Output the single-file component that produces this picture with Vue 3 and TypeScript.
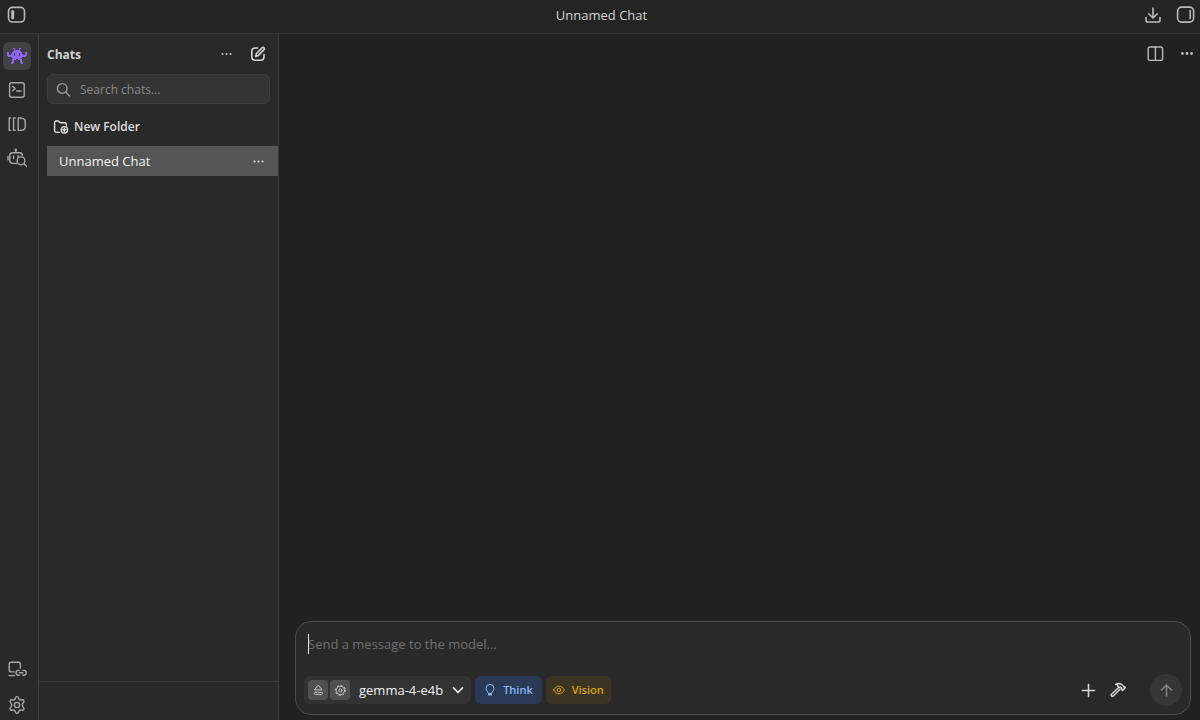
<script setup lang="ts">
import { onMounted, ref } from 'vue'

interface Chat {
  id: number
  title: string
}

const chats = ref<Chat[]>([{ id: 1, title: 'Unnamed Chat' }])
const activeId = ref(1)
const query = ref('')
const message = ref('')
const messageBox = ref<HTMLTextAreaElement | null>(null)

const invader = [
  '......##....##......',
  '.......#....#.......',
  '.......######.......',
  '......########......',
  '##...##########...##',
  '##...##.####.##...##',
  '##..###.####.###..##',
  '#######.####.#######',
  '.##################.',
  '.....##########.....',
  '......########......',
  '.....####..####.....',
  '.....##......##.....',
  '.....##......##.....',
  '....###......###....',
  '....##........##....',
]

const invaderPath = invader
  .flatMap((row, y) => [...row].map((c, x) => (c === '#' ? `M${x} ${y}h1v1h-1z` : '')))
  .join('')

onMounted(() => messageBox.value?.focus())
</script>

<template>
  <div class="app">
    <header class="titlebar">
      <button class="icon-btn" aria-label="Toggle sidebar">
        <svg width="20" height="20" viewBox="0 0 20 20" class="bold">
          <rect x="1.500" y="2.400" width="16" height="14.600" rx="4" />
          <rect x="4.200" y="5.200" width="3" height="9" rx="1" class="solid" />
        </svg>
      </button>
      <h1 class="title">Unnamed Chat</h1>
      <div class="titlebar-end">
        <button class="icon-btn" aria-label="Downloads">
          <svg width="20" height="20" viewBox="0 0 20 20" class="bold">
            <path d="M10 3v9.600M5.800 8.800l4.200 4.200 4.200-4.200M3 12.600v2.600a1.800 1.800 0 0 0 1.800 1.800h10.400a1.800 1.800 0 0 0 1.800-1.800v-2.600" />
          </svg>
        </button>
        <button class="icon-btn" aria-label="Toggle right panel">
          <svg width="20" height="20" viewBox="0 0 20 20" class="bold">
            <rect x="1.600" y="2.100" width="16" height="15" rx="4" />
            <path d="M14.200 5.600v8" />
          </svg>
        </button>
      </div>
    </header>

    <div class="body">
      <nav class="rail" aria-label="Sections">
        <button class="rail-btn active" aria-label="Chat">
          <svg width="20" height="16" viewBox="0 0 20 16" class="invader">
            <path :d="invaderPath" />
          </svg>
        </button>
        <button class="rail-btn" aria-label="Developer">
          <svg width="20" height="20" viewBox="0 0 20 20">
            <rect x="2.600" y="2.800" width="14.600" height="14.400" rx="2" />
            <path d="M5.600 6.400l2.600 2.200-2.600 2.200M9.600 11h4.400" />
          </svg>
        </button>
        <button class="rail-btn" aria-label="My models">
          <svg width="20" height="20" viewBox="0 0 20 20">
            <path d="M3.800 4H2.200v12.400h1.600M8.200 4H6.600v12.400h1.600M11.200 4h2.200c3 .4 4.800 1.400 4.800 3v6.400c0 1.600-1.800 2.600-4.800 3h-2.200z" />
          </svg>
        </button>
        <button class="rail-btn" aria-label="Discover">
          <svg width="20" height="20" viewBox="0 0 20 20">
            <circle cx="8.800" cy="1.800" r="1.300" class="solid" />
            <path d="M8.800 2.400v2.400M15.400 7.600c0-1.800-1-2.800-2.600-2.800H5.600c-1.800 0-2.800 1-2.800 2.800v5c0 1.800 1 2.800 2.800 2.800h4.200M1 8.400v3.400M6.600 8v2.600M11 7.600v1.400" />
            <circle cx="14" cy="12.800" r="3.900" />
            <path d="M16.800 15.600l3 3" />
          </svg>
        </button>
        <div class="spacer"></div>
        <button class="rail-btn" aria-label="Link devices">
          <svg width="20" height="20" viewBox="0 0 20 20">
            <path d="M13.400 9V5.400c0-1.400-.7-2.100-2.100-2.100H4.300c-1.400 0-2.100.7-2.100 2.100v5.400c0 1.400.7 2.100 2.100 2.100h2.900M2 16.600h5.600" />
            <path d="M12.400 11.400h-1a2.400 2.400 0 0 0 0 4.800h1M15.800 11.400h1a2.400 2.400 0 0 1 0 4.800h-1M12.400 13.800h3.400" />
          </svg>
        </button>
        <button class="rail-btn" aria-label="Settings">
          <svg width="20" height="20" viewBox="0 0 20 20">
            <path d="M8.300 3.300c.4-2.200 3-2.200 3.400 0 .3 1.400 1.500 2.100 2.800 1.600 2.100-.8 3.400 1.500 1.700 2.900-1.100.9-1.100 3.500 0 4.400 1.700 1.400.4 3.700-1.700 2.900-1.300-.5-2.500.2-2.800 1.600-.4 2.200-3 2.200-3.400 0-.3-1.400-1.500-2.100-2.800-1.600-2.100.8-3.400-1.500-1.700-2.900 1.100-.9 1.100-3.500 0-4.400-1.700-1.400-.4-3.700 1.700-2.900 1.300.5 2.500-.2 2.800-1.600z" />
            <circle cx="10" cy="10" r="2.600" />
          </svg>
        </button>
      </nav>

      <aside class="sidebar">
        <div class="sidebar-head">
          <h2>Chats</h2>
          <button class="icon-btn small" aria-label="Chat list options">
            <svg width="16" height="16" viewBox="0 0 16 16" class="dots">
              <circle cx="4.500" cy="8" r="1.100" /><circle cx="8.500" cy="8" r="1.100" /><circle cx="12.500" cy="8" r="1.100" />
            </svg>
          </button>
          <button class="icon-btn small light" aria-label="New chat">
            <svg width="16" height="16" viewBox="0 0 16 16" class="bold">
              <path d="M7.600 2H5.200C3 2 1.800 3.200 1.800 5.400v5.400c0 2.200 1.200 3.400 3.400 3.400h5.400c2.200 0 3.400-1.200 3.400-3.400V8.600" />
              <path d="M5.800 10.400l.5-2.700 5.900-5.900c.6-.6 1.300-.5 1.800 0s.6 1.200 0 1.800L8.200 9.600z" />
            </svg>
          </button>
        </div>

        <label class="search">
          <svg width="16" height="16" viewBox="0 0 16 16">
            <circle cx="6.200" cy="6.400" r="4.800" />
            <path d="M9.700 9.900l4 4" />
          </svg>
          <input v-model="query" type="text" placeholder="Search chats..." aria-label="Search chats" />
        </label>

        <button class="new-folder">
          <svg width="16" height="16" viewBox="0 0 16 16">
            <path d="M6.400 13.400H3.600c-1.400 0-2-.8-2-2V3.600c0-1 .6-1.600 1.600-1.600h1.600c1.400 0 1.600 1.800 3.200 1.800h3.600c1.200 0 1.800.6 1.800 1.800v.6" />
            <circle cx="11.400" cy="10.800" r="3.200" />
            <path d="M11.400 9.200v3.200M9.800 10.800h3.200" />
          </svg>
          New Folder
        </button>

        <ul class="chat-list">
          <li v-for="chat in chats" :key="chat.id" class="chat" :class="{ selected: chat.id === activeId }">
            <button class="chat-name" @click="activeId = chat.id">{{ chat.title }}</button>
            <button class="icon-btn small light" aria-label="Chat options">
              <svg width="16" height="16" viewBox="0 0 16 16" class="dots">
                <circle cx="4.500" cy="8.500" r="1.100" /><circle cx="8.500" cy="8.500" r="1.100" /><circle cx="12.500" cy="8.500" r="1.100" />
              </svg>
            </button>
          </li>
        </ul>
        <div class="sidebar-foot"></div>
      </aside>

      <main class="main">
        <div class="toolbar">
          <button class="icon-btn" aria-label="Split view">
            <svg width="20" height="20" viewBox="0 0 20 20">
              <rect x="3.200" y="3" width="14.400" height="13.400" rx="2" />
              <path d="M10.400 3v13.400" />
            </svg>
          </button>
          <button class="icon-btn" aria-label="More">
            <svg width="20" height="20" viewBox="0 0 20 20" class="dots">
              <circle cx="5.400" cy="9.500" r="1.400" /><circle cx="10" cy="9.500" r="1.400" /><circle cx="14.600" cy="9.500" r="1.400" />
            </svg>
          </button>
        </div>

        <div class="spacer"></div>

        <form class="composer" @submit.prevent>
          <div class="entry" :class="{ empty: !message }">
            <textarea ref="messageBox" v-model="message" rows="1" placeholder="Send a message to the model..." aria-label="Message"></textarea>
          </div>
          <div class="actions">
            <div class="model">
              <button type="button" class="mini" aria-label="Eject model">
                <svg width="12" height="12" viewBox="0 0 12 12">
                  <path d="M6.500 1.400l3.600 4.400H2.900z" />
                  <rect x="2.500" y="8.300" width="8" height="2.200" rx="1" />
                </svg>
              </button>
              <button type="button" class="mini" aria-label="Model settings">
                <svg width="12" height="12" viewBox="0 0 12 12">
                  <circle cx="6.400" cy="6.400" r="4.200" />
                  <circle cx="6.400" cy="6.400" r="5" stroke-dasharray="1.300 2.627" />
                  <circle cx="6.400" cy="6.400" r="1.600" />
                </svg>
              </button>
              <button type="button" class="model-name">
                gemma-4-e4b
                <svg width="12" height="12" viewBox="0 0 12 12" class="chevron"><path d="M1.400 3.800L6 8.400l4.600-4.600" /></svg>
              </button>
            </div>
            <button type="button" class="chip think">
              <svg width="12" height="12" viewBox="0 0 12 12">
                <path d="M4.300 9C4.300 7.600 2 6.800 2 4.400a4 4 0 0 1 8 0C10 6.800 7.700 7.600 7.700 9z" />
                <path d="M5 10.600h2" class="foot" />
              </svg>
              Think
            </button>
            <button type="button" class="chip vision">
              <svg width="12" height="12" viewBox="0 0 12 12">
                <path d="M.7 6C2 3.400 4 2.100 6 2.100S10 3.400 11.300 6C10 8.600 8 9.900 6 9.900S2 8.600.7 6z" />
                <circle cx="6" cy="6" r="1.800" />
              </svg>
              Vision
            </button>
            <div class="spacer"></div>
            <button type="button" class="icon-btn light tool" aria-label="Add attachment">
              <svg width="16" height="16" viewBox="0 0 16 16" class="bold"><path d="M8.500 2.500v12M2.500 8.500h12" /></svg>
            </button>
            <button type="button" class="icon-btn light tool" aria-label="Tools">
              <svg width="16" height="16" viewBox="0 0 16 16">
                <path d="M5.600 2.400c2.800-1.500 5.400-1 7.200 1l1 1.600 1-.2.600.8-2.800 3-.9-.8.200-1.200-1.700-1.700-1.300.6-1.300-1.300.2-1.100z" />
                <path d="M8.700 5.500l-7 6.500c-.8.800-.6 1.500-.2 1.900s1.200.6 2-.2l6.700-6.800" />
              </svg>
            </button>
            <button class="send" aria-label="Send">
              <svg width="16" height="16" viewBox="0 0 16 16" class="bold"><path d="M8.500 14V3.200M3.500 8l5-5 5 5" /></svg>
            </button>
          </div>
        </form>
      </main>
    </div>
  </div>
</template>

<style>
body {
  margin: 0;
  background: #212121;
}
</style>

<style scoped>
.app {
  display: flex;
  flex-direction: column;
  height: 100vh;
  background: #212121;
  color: #d2d2d2;
  font-family: 'Open Sans', 'Noto Sans', sans-serif;
  font-size: 12px;
  line-height: 16px;
}

.app * {
  box-sizing: border-box;
}

button,
input,
textarea {
  margin: 0;
  padding: 0;
  border: 0;
  background: none;
  color: inherit;
  font: inherit;
  outline: none;
}

button {
  display: flex;
  align-items: center;
  justify-content: center;
  cursor: pointer;
}

svg {
  display: block;
  flex: none;
  fill: none;
  stroke: currentColor;
  stroke-width: 1.4;
  stroke-linecap: round;
  stroke-linejoin: round;
}

svg.bold {
  stroke-width: 1.6;
}

.solid,
.dots {
  fill: currentColor;
  stroke: none;
}

.spacer {
  flex: 1;
}

.icon-btn {
  width: 20px;
  height: 20px;
  color: #b9b9b9;
}

.icon-btn.small {
  width: 16px;
  height: 16px;
}

.icon-btn.light {
  color: #d6d6d6;
}

.titlebar {
  display: grid;
  grid-template-columns: 1fr auto 1fr;
  align-items: center;
  flex: none;
  height: 34px;
  padding: 0 4px 4px 7px;
  background: #242424;
  border-bottom: 1px solid #333;
}

.title {
  margin: 0;
  font-size: 13px;
  font-weight: 400;
}

.titlebar-end {
  display: flex;
  justify-content: flex-end;
  gap: 13px;
}

.body {
  display: flex;
  flex: 1;
  min-height: 0;
}

.rail {
  display: flex;
  flex-direction: column;
  gap: 6px;
  flex: none;
  padding: 8px 7px 1px 3px;
  background: #292929;
  border-right: 1px solid #3f3f3f;
}

.rail-btn {
  width: 28px;
  height: 28px;
  border-radius: 6px;
  color: #a8a8a8;
}

.rail-btn.active {
  background: #424242;
}

.rail .rail-btn:last-child {
  margin-top: 2px;
}

.rail-btn .invader {
  fill: #8f63f5;
  stroke: none;
}

.sidebar {
  display: flex;
  flex-direction: column;
  flex: none;
  width: 240px;
  padding-left: 8px;
  background: #292929;
  border-right: 1px solid #3a3a3a;
}

.sidebar-head {
  display: flex;
  align-items: center;
  gap: 16px;
  height: 40px;
  padding-right: 12px;
}

.sidebar-head h2 {
  flex: 1;
  margin: 0;
  padding-top: 1px;
  font-size: 12px;
  font-weight: 700;
}

.search {
  display: flex;
  align-items: center;
  gap: 8px;
  height: 30px;
  margin-right: 8px;
  padding: 1px 8px 0;
  border: 1px solid #3d3d3d;
  border-radius: 6px;
  background: #343434;
  color: #9a9a9a;
}

.search input {
  flex: 1;
  min-width: 0;
}

.search input::placeholder {
  color: #8a8a8a;
}

.new-folder {
  gap: 5px;
  align-self: flex-start;
  height: 30px;
  margin: 8px 0 4px;
  padding-left: 6px;
  color: #dedede;
  font-weight: 600;
}

.chat-list {
  flex: 1;
  margin: 0;
  padding: 0;
  list-style: none;
}

.chat {
  display: flex;
  align-items: center;
  height: 30px;
  padding: 0 12px;
}

.chat.selected {
  background: #555;
  color: #f4f4f4;
}

.chat-name {
  flex: 1;
  justify-content: flex-start;
  font-size: 13px;
}

.sidebar-foot {
  height: 39px;
  margin-left: -8px;
  border-top: 1px solid #393939;
}

.main {
  display: flex;
  flex-direction: column;
  flex: 1;
  min-width: 0;
}

.toolbar {
  display: flex;
  justify-content: flex-end;
  gap: 12px;
  padding: 10px 3px 0;
}

.composer {
  display: flex;
  flex-direction: column;
  gap: 20px;
  margin: 0 9px 5px 16px;
  padding: 12px 8px 8px;
  border: 1px solid #4c4c4c;
  border-radius: 16px;
  background: #292929;
}

.entry {
  position: relative;
  margin-left: 4px;
}

.entry.empty:focus-within::before {
  content: '';
  position: absolute;
  top: 0;
  left: 0;
  width: 1px;
  height: 20px;
  background: #e6e6e6;
}

.entry textarea {
  display: block;
  width: 100%;
  height: 20px;
  resize: none;
  overflow: hidden;
  color: #e6e6e6;
  font-size: 13px;
  line-height: 20px;
}

.entry.empty textarea {
  caret-color: transparent;
}

.entry textarea::placeholder {
  color: #707070;
}

.actions {
  display: flex;
  align-items: center;
  gap: 4px;
}

.model {
  display: flex;
  align-items: center;
  gap: 2px;
  height: 28px;
  padding: 0 7px 0 4px;
  border-radius: 6px;
  background: #333;
}

.mini {
  width: 20px;
  height: 20px;
  border-radius: 4px;
  background: #505050;
  color: #c4c4c4;
}

.mini svg,
.chip svg {
  stroke-width: 1;
}

.model-name {
  gap: 9px;
  padding-left: 7px;
  color: #f0f0f0;
  font-size: 13px;
  font-weight: 500;
}

.model-name .chevron {
  stroke-width: 1.6;
}

.chip {
  gap: 7px;
  height: 28px;
  border-radius: 6px;
  font-size: 11px;
  font-weight: 600;
}

.think {
  padding: 0 9px;
  background: #293956;
  color: #8abcf5;
}

.foot {
  stroke-width: 2;
}

.vision {
  padding: 0 7px;
  background: #3c3524;
  color: #d9a20e;
}

.tool {
  width: 26px;
  height: 28px;
}

.send {
  width: 32px;
  height: 32px;
  margin-left: 15px;
  border-radius: 50%;
  background: #363636;
  color: #838383;
}
</style>
